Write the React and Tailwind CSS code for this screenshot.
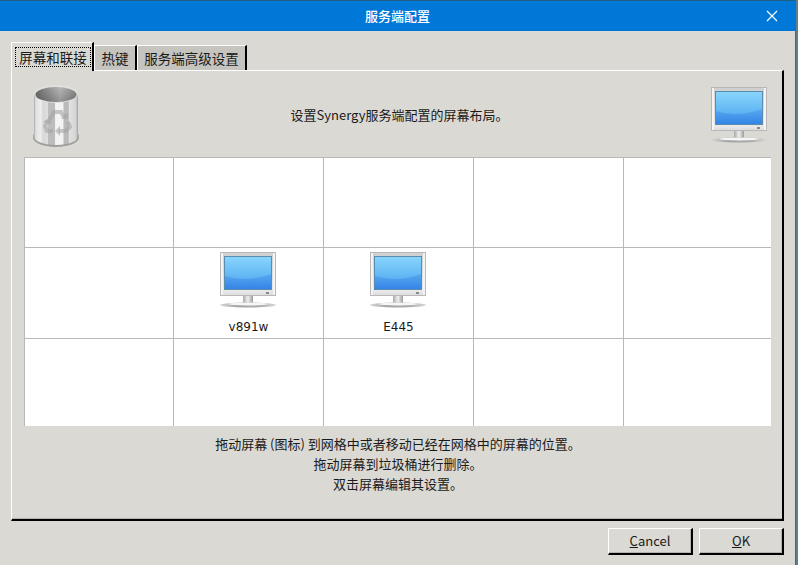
const CJK = '"Noto Sans CJK SC", "Noto Sans", sans-serif';

const Monitor = ({ className }) => (
  <svg className={className} width="56" height="56" viewBox="0 0 56 56">
    <defs>
      <linearGradient id="bezel" x1="0" y1="0" x2="0" y2="1">
        <stop offset="0" stopColor="#cfcfcf" />
        <stop offset="0.12" stopColor="#d2d2d2" />
        <stop offset="0.9" stopColor="#e8e8e8" />
        <stop offset="1" stopColor="#d8d8d8" />
      </linearGradient>
      <linearGradient id="glass" x1="0" y1="0" x2="0" y2="1">
        <stop offset="0" stopColor="#8ad6fc" />
        <stop offset="0.6" stopColor="#62b6f4" />
        <stop offset="1" stopColor="#4a9cee" />
      </linearGradient>
      <linearGradient id="low" x1="0" y1="0" x2="0" y2="1">
        <stop offset="0" stopColor="#55a6f0" />
        <stop offset="1" stopColor="#2f80e4" />
      </linearGradient>
      <linearGradient id="neck" x1="0" y1="0" x2="1" y2="0">
        <stop offset="0" stopColor="#a8a8a8" />
        <stop offset="0.5" stopColor="#f0f0f0" />
        <stop offset="1" stopColor="#9a9a9a" />
      </linearGradient>
      <linearGradient id="foot" x1="0" y1="0" x2="1" y2="0">
        <stop offset="0" stopColor="#dad9d4" />
        <stop offset="0.3" stopColor="#a4a4a4" />
        <stop offset="0.7" stopColor="#ababab" />
        <stop offset="1" stopColor="#dad9d4" />
      </linearGradient>
    </defs>
    <rect x="0" y="0" width="56" height="44" fill="url(#bezel)" />
    <rect x="0.5" y="0.5" width="55" height="43" fill="none" stroke="#b8b8b8" />
    <rect x="1" y="1" width="2" height="42" fill="#f4f4f4" />
    <rect x="53" y="1" width="2" height="42" fill="#f4f4f4" />
    <rect x="4" y="4" width="48" height="34" fill="url(#glass)" />
    <path d="M5 24 Q26 31 51 22 L51 37 L5 37 Z" fill="url(#low)" opacity="0.85" />
    <rect x="4.5" y="4.5" width="47" height="33" fill="none" stroke="#5a8cae" />
    <rect x="46" y="40" width="3" height="2" fill="#8a8a8a" />
    <rect x="23" y="44" width="10" height="7" fill="url(#neck)" />
    <ellipse cx="28" cy="53" rx="28" ry="2.5" fill="url(#foot)" />
    <ellipse cx="28" cy="52" rx="20" ry="1.5" fill="#f6f6f6" />
  </svg>
);

const Trash = () => (
  <svg width="48" height="64" viewBox="0 0 48 64">
    <defs>
      <linearGradient id="can" x1="0" y1="0" x2="1" y2="0">
        <stop offset="0" stopColor="#a8a8a8" />
        <stop offset="0.04" stopColor="#e0e0e0" />
        <stop offset="0.16" stopColor="#eeeeee" />
        <stop offset="0.2" stopColor="#d8d8d8" />
        <stop offset="0.31" stopColor="#dedede" />
        <stop offset="0.33" stopColor="#bcbcbc" />
        <stop offset="0.47" stopColor="#bcbcbc" />
        <stop offset="0.49" stopColor="#f4f4f4" />
        <stop offset="0.66" stopColor="#f2f2f2" />
        <stop offset="0.68" stopColor="#bababa" />
        <stop offset="0.78" stopColor="#bababa" />
        <stop offset="0.8" stopColor="#e2e2e2" />
        <stop offset="0.95" stopColor="#d4d4d4" />
        <stop offset="1" stopColor="#a0a0a0" />
      </linearGradient>
      <linearGradient id="inner" x1="0" y1="0" x2="1" y2="0">
        <stop offset="0" stopColor="#6e6e6e" />
        <stop offset="0.6" stopColor="#b8b8b8" />
        <stop offset="1" stopColor="#8a8a8a" />
      </linearGradient>
      <linearGradient id="depth" x1="0" y1="0" x2="0" y2="1">
        <stop offset="0" stopColor="#000" stopOpacity="0" />
        <stop offset="1" stopColor="#000" stopOpacity="0.2" />
      </linearGradient>
    </defs>
    <path d="M1.5 50 L1 54 Q3 62 24 63 Q45 62 47 54 L46.5 50 Z" fill="#777" opacity="0.6" />
    <path d="M2 10 L2 53 Q4 60 24 61 Q44 60 46 53 L46 10 Z" fill="url(#can)" />
    <ellipse cx="24" cy="10" rx="22" ry="9" fill="#e0e0e0" />
    <ellipse cx="24" cy="10.5" rx="20.5" ry="7.5" fill="url(#inner)" />
    <ellipse cx="24" cy="10.5" rx="20.5" ry="7.5" fill="url(#depth)" />
    <g fill="none" stroke="#a6a6a6" strokeWidth="4" opacity="0.6">
      <path d="M18 35 L22 28 L29 28 L32 33" />
      <path d="M36 38 L38 43 L34 47 L27 47" />
      <path d="M21 47 L15 47 L13 42 L16 37" />
    </g>
    <g fill="#a6a6a6" opacity="0.6">
      <path d="M29 35 L36 35 L36 28 Z" />
      <path d="M28 42 L28 52 L23 47 Z" />
      <path d="M11 38 L18 33 L20 40 Z" />
    </g>
  </svg>
);

const Tab = ({ label, active, width }) =>
  active ? (
    <div className="w-[83px] h-[29px] -mb-px z-10 bg-[#dad9d4] border-t border-l border-white border-r-2 border-r-black pt-[4px] pl-[3px]">
      <div className="h-[20px] w-[76px] border border-dotted border-black flex items-center justify-center text-[13.5px] text-[#1a1a1a]">
        {label}
      </div>
    </div>
  ) : (
    <div className={`${width} h-[25px] bg-[#c5c4bf] border-t border-l border-white border-r-2 border-r-black flex items-center justify-center text-[13.5px] text-[#1a1a1a]`}>
      {label}
    </div>
  );

const rows = [
  [null, null, null, null, null],
  [null, 'v891w', 'E445', null, null],
  [null, null, null, null, null],
];

const Btn = ({ children }) => (
  <div className="w-[85px] h-[27px] bg-[#dad9d4] border-t border-l border-white border-r-2 border-b-2 border-r-black border-b-black shadow-[inset_-1px_-1px_0_#b4b3ae] flex items-center justify-center pb-[1px] text-[13px] text-[#1a1a1a]">
    {children}
  </div>
);

export default function App() {
  return (
    <div className="w-[798px] h-[565px] flex overflow-hidden bg-[#dad9d4]" style={{ fontFamily: CJK }}>
      <div className="w-[795px] h-full flex flex-col">
        <div className="h-[1px] bg-[#1f5f80]" />
        <div className="h-[30px] bg-[#0078d7] flex items-center relative justify-center text-white text-[13px] font-medium">
          服务端配置
          <svg className="absolute left-[766px] top-[9px]" width="12" height="12" viewBox="0 0 12 12">
            <path d="M1 1 L11 11 M11 1 L1 11" stroke="#fff" strokeWidth="1.2" />
          </svg>
        </div>

        <div className="px-[11px] pt-[11px] flex-1 flex flex-col">
          <div className="flex items-start h-[28px]">
            <Tab label="屏幕和联接" active />
            <div className="flex mt-[3px]">
              <Tab label="热键" width="w-[43px]" />
              <Tab label="服务端高级设置" width="w-[110px]" />
            </div>
          </div>
          <div className="w-[773px] h-[451px] border-t border-l border-white border-r-2 border-b-2 border-r-black border-b-black shadow-[inset_0_-1px_0_#b4b3ae] flex flex-col items-start pl-[12px]">
            <div className="h-[86px] w-[748px] flex items-start pt-[13px]">
              <div className="w-[48px] ml-[8px]"><Trash /></div>
              <div className="flex-1 text-center text-[13px] text-[#1a1a1a] pt-[21px] pl-[8px]">
                设置Synergy服务端配置的屏幕布局。
              </div>
              <Monitor className="mr-[5px] mt-[3px]" />
            </div>
            <div className="w-[747px] h-[269px] bg-white border-t border-l border-[#b8b8b8] grid grid-cols-[149px_150px_150px_150px_147px] grid-rows-[90px_91px_87px]">
              {rows.flatMap((row, r) =>
                row.map((name, c) => (
                  <div
                    key={`${r}-${c}`}
                    className={`flex flex-col items-center border-[#b8b8b8] ${c < 4 ? 'border-r' : ''} ${r < 2 ? 'border-b' : ''}`}
                  >
                    {name && (
                      <>
                        <Monitor className="mt-[4px] mr-[2px]" />
                        <span className="text-[12px] leading-[16px] mt-[11px] text-[#1a1a1a]" style={{ fontFamily: '"DejaVu Sans", sans-serif' }}>{name}</span>
                      </>
                    )}
                  </div>
                ))
              )}
            </div>
            <div className="w-[748px] text-center text-[13px] leading-[20px] text-[#1a1a1a] pt-[8px]">
              <p>拖动屏幕 (图标) 到网格中或者移动已经在网格中的屏幕的位置。</p>
              <p>拖动屏幕到垃圾桶进行删除。</p>
              <p>双击屏幕编辑其设置。</p>
            </div>
          </div>
          <div className="flex justify-end gap-[6px] w-[773px] mt-[7px]">
            <Btn><span className="underline">C</span>ancel</Btn>
            <Btn><span className="underline">O</span>K</Btn>
          </div>
        </div>
      </div>
      <div className="w-[3px] h-full bg-[#5f7f8c] border-l border-[#2f6f8a]" />
    </div>
  );
}
